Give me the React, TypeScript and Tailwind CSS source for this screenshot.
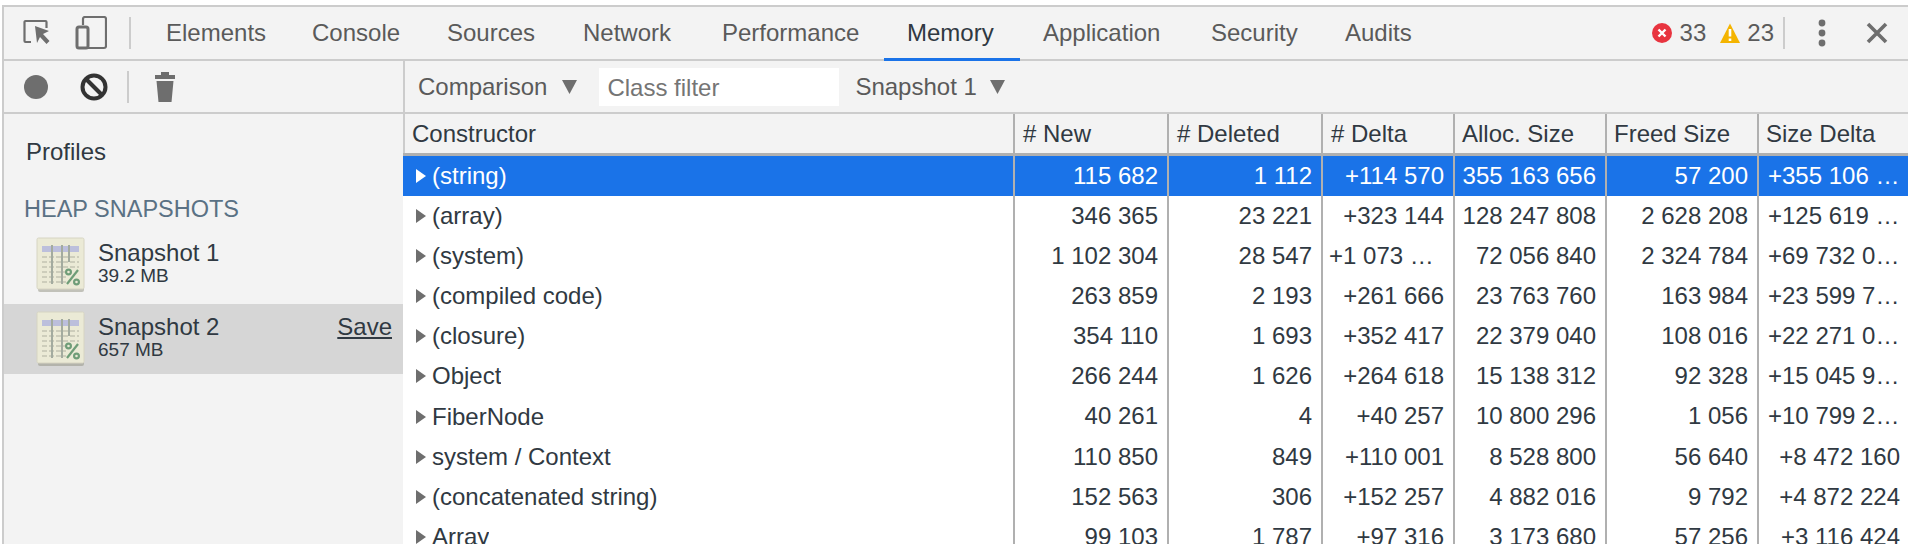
import React from 'react';

const tabs = [
  { name: 'Elements', width: 'w-[146px]' },
  { name: 'Console', width: 'w-[135px]' },
  { name: 'Sources', width: 'w-[136px]' },
  { name: 'Network', width: 'w-[139px]' },
  { name: 'Performance', width: 'w-[185px]' },
  { name: 'Memory', width: 'w-[136px]' },
  { name: 'Application', width: 'w-[168px]' },
  { name: 'Security', width: 'w-[134px]' },
  { name: 'Audits', width: 'w-[110px]' },
];

const columns = ['Constructor', '# New', '# Deleted', '# Delta', 'Alloc. Size', 'Freed Size', 'Size Delta'];

const rows = [
  ['(string)', '115 682', '1 112', '+114 570', '355 163 656', '57 200', '+355 106 456'],
  ['(array)', '346 365', '23 221', '+323 144', '128 247 808', '2 628 208', '+125 619 600'],
  ['(system)', '1 102 304', '28 547', '+1 073 757', '72 056 840', '2 324 784', '+69 732 056'],
  ['(compiled code)', '263 859', '2 193', '+261 666', '23 763 760', '163 984', '+23 599 776'],
  ['(closure)', '354 110', '1 693', '+352 417', '22 379 040', '108 016', '+22 271 024'],
  ['Object', '266 244', '1 626', '+264 618', '15 138 312', '92 328', '+15 045 984'],
  ['FiberNode', '40 261', '4', '+40 257', '10 800 296', '1 056', '+10 799 240'],
  ['system / Context', '110 850', '849', '+110 001', '8 528 800', '56 640', '+8 472 160'],
  ['(concatenated string)', '152 563', '306', '+152 257', '4 882 016', '9 792', '+4 872 224'],
  ['Array', '99 103', '1 787', '+97 316', '3 173 680', '57 256', '+3 116 424'],
];

const gridCols = 'grid grid-cols-[610px_154px_154px_132px_152px_152px_151px]';

const SnapshotIcon = () => (
  <svg width="50" height="56" viewBox="0 0 50 56" className="shrink-0 blur-[0.6px]">
    <rect x="2" y="3" width="46" height="52" rx="2" fill="#8f8f80" opacity="0.5" />
    <rect x="1" y="1" width="47" height="51" rx="1.5" fill="#ebead6" stroke="#d6d4c2" />
    <rect x="6" y="9" width="37" height="6" fill="#bcbfdc" />
    <g stroke="#c4c4b2" strokeWidth="1.5" strokeDasharray="5 2">
      <path d="M6 20h37M6 25h37M6 30h37M6 35h24M6 40h24M6 45h24" />
    </g>
    <g stroke="#a3ab9f" strokeWidth="2">
      <path d="M16 8v39M26 8v39M33 8v17" />
    </g>
    <g stroke="#6f9d78" strokeWidth="2.2" fill="none">
      <path d="M42 33 31 47" />
      <circle cx="32.5" cy="35" r="2.4" />
      <circle cx="40.5" cy="45" r="2.4" />
    </g>
  </svg>
);

const Arrow = ({ white }: { white: boolean }) => (
  <svg width="12" height="16" viewBox="0 0 12 16" className="mr-[5px] shrink-0">
    <path d="M1 1 11 8 1 15z" fill={white ? '#ffffff' : '#6e6e6e'} />
  </svg>
);

const Caret = () => (
  <svg width="15" height="14" viewBox="0 0 15 14">
    <path d="M0 0h15L7.5 14z" fill="#6e6e6e" />
  </svg>
);

const Divider = () => <div className="w-[2px] h-[32px] bg-[#cccccc]" />;

const App: React.FC = () => {
  return (
    <div
      className="w-[1908px] h-[544px] overflow-hidden bg-white pt-[5px] pl-[2px] text-[24px] text-[#303942]"
      style={{ fontFamily: '"Liberation Sans", Arial, sans-serif' }}
    >
      <div className="h-[539px] flex flex-col border-t-2 border-l-2 border-[#cccccc] bg-[#f3f3f3]">
        {/* Top tab bar */}
        <div className="h-[54px] shrink-0 flex items-stretch border-b-2 border-[#cccccc]">
          <div className="w-[125px] flex items-center shrink-0">
            <svg width="30" height="30" viewBox="0 0 30 30" className="ml-[19px]">
              <path d="M8 24H2.5a1 1 0 0 1-1-1V4a1 1 0 0 1 1-1h20a1 1 0 0 1 1 1v6" fill="none" stroke="#6e6e6e" strokeWidth="2.2" />
              <path d="M12 8 26 13l-6 3 6.5 7-3 3-6.5-7-3 6z" fill="#6e6e6e" />
            </svg>
            <svg width="32" height="34" viewBox="0 0 32 34" className="ml-[22px]">
              <path d="M8 9V3a2 2 0 0 1 2-2h19a2 2 0 0 1 2 2v27a2 2 0 0 1-2 2H13" fill="none" stroke="#6e6e6e" strokeWidth="2.2" />
              <rect x="2" y="11" width="11" height="21" rx="2" fill="none" stroke="#6e6e6e" strokeWidth="3" />
            </svg>
          </div>
          <div className="flex items-center">
            <Divider />
          </div>
          <div className="flex ml-[12px]">
            {tabs.map((tab) => (
              <div
                key={tab.name}
                className={
                  tab.name === 'Memory'
                    ? `${tab.width} pl-[23px] flex items-center border-b-[3px] -mb-[2px] border-[#1a73e8] text-[#303942]`
                    : `${tab.width} pl-[23px] flex items-center text-[#5a5a5a]`
                }
              >
                {tab.name}
              </div>
            ))}
          </div>
          <div className="ml-auto flex items-center text-[#5a5a5a]">
            <svg width="20" height="20" viewBox="0 0 20 20" className="mr-[8px]">
              <circle cx="10" cy="10" r="10" fill="#e8343f" />
              <path d="M6.5 6.5l7 7M13.5 6.5l-7 7" stroke="#ffffff" strokeWidth="2.4" />
            </svg>
            <span>33</span>
            <svg width="20" height="20" viewBox="0 0 20 20" className="ml-[14px] mr-[7px]">
              <path d="M10 0.5 20 20H0z" fill="#f4b400" />
              <path d="M10 6v7.5M10 15.5v2.5" stroke="#ffffff" strokeWidth="2.6" />
            </svg>
            <span>23</span>
            <div className="ml-[9px]">
              <Divider />
            </div>
            <svg width="8" height="28" viewBox="0 0 8 28" className="ml-[33px]">
              <circle cx="4" cy="4" r="3.4" fill="#6e6e6e" />
              <circle cx="4" cy="14" r="3.4" fill="#6e6e6e" />
              <circle cx="4" cy="24" r="3.4" fill="#6e6e6e" />
            </svg>
            <svg width="22" height="22" viewBox="0 0 22 22" className="ml-[40px] mr-[20px]">
              <path d="M2 2l18 18M20 2 2 20" stroke="#6e6e6e" strokeWidth="3.6" />
            </svg>
          </div>
        </div>

        <div className="flex flex-1 min-h-0">
          {/* Left sidebar */}
          <div className="w-[399px] shrink-0 flex flex-col">
            <div className="h-[53px] shrink-0 flex items-center border-b-2 border-[#cccccc]">
              <svg width="24" height="24" viewBox="0 0 24 24" className="ml-[20px]">
                <circle cx="12" cy="12" r="12" fill="#6e6e6e" />
              </svg>
              <svg width="28" height="28" viewBox="0 0 28 28" className="ml-[32px]">
                <circle cx="14" cy="14" r="11.5" fill="none" stroke="#333333" strokeWidth="4" />
                <path d="M6 6l16 16" stroke="#333333" strokeWidth="4" />
              </svg>
              <div className="ml-[19px]">
                <Divider />
              </div>
              <svg width="20" height="30" viewBox="0 0 20 30" className="ml-[26px]">
                <path d="M6 0h8v3h6v4H0V3h6z" fill="#6e6e6e" />
                <path d="M1.5 9h17l-2 21h-13z" fill="#6e6e6e" />
              </svg>
            </div>
            <div className="pl-[22px] mt-[24px] leading-[28px]">Profiles</div>
            <div className="pl-[20px] mt-[29px] leading-[28px] text-[#5a7184] text-[23.5px]">HEAP SNAPSHOTS</div>
            <div className="h-[70px] mt-[7px] mb-[4px] flex items-center pl-[32px]">
              <SnapshotIcon />
              <div className="ml-[12px] mb-[6px]">
                <div className="leading-[27px]">Snapshot 1</div>
                <div className="leading-[20px] text-[19px]">39.2 MB</div>
              </div>
            </div>
            <div className="h-[70px] flex items-center pl-[32px] pr-[11px] bg-[#d6d6d6]">
              <SnapshotIcon />
              <div className="ml-[12px] mb-[6px]">
                <div className="leading-[27px]">Snapshot 2</div>
                <div className="leading-[20px] text-[19px]">657 MB</div>
              </div>
              <div className="ml-auto mb-[24px] underline">Save</div>
            </div>
          </div>

          {/* Right panel */}
          <div className="flex-1 min-w-0 flex flex-col border-l-2 border-[#cccccc]">
            <div className="h-[53px] shrink-0 flex items-center border-b-2 border-[#cccccc] text-[#5a5a5a]">
              <span className="ml-[13px]">Comparison</span>
              <div className="ml-[15px]">
                <Caret />
              </div>
              <div className="ml-[22px] w-[240px] h-[38px] bg-white flex items-center pl-[8px] pt-[2px] text-[#757575]">
                Class filter
              </div>
              <span className="ml-[16px]">Snapshot 1</span>
              <div className="ml-[13px]">
                <Caret />
              </div>
            </div>

            <div className={`${gridCols} -ml-[2px] h-[42px] shrink-0 border-b-[3px] border-[#b0b0b0]`}>
              {columns.map((col, i) => (
                <div
                  key={col}
                  className={
                    i === 0
                      ? 'pl-[9px] flex items-center'
                      : i < 4
                        ? 'pl-[8px] flex items-center border-l-2 border-[#b0b0b0]'
                        : 'pl-[7px] flex items-center border-l-2 border-[#b0b0b0]'
                  }
                >
                  {col}
                </div>
              ))}
            </div>

            <div className="-ml-[2px] bg-white flex-1 min-h-0">
              {rows.map((row, r) => (
                <div
                  key={row[0]}
                  className={
                    r === 0
                      ? `${gridCols} h-[40px] bg-[#1a73e8] text-white`
                      : `${gridCols} h-[40.1px] text-[#303942]`
                  }
                >
                  {row.map((cell, i) =>
                    i === 0 ? (
                      <div key={i} className="flex items-center pl-[12px]">
                        <Arrow white={r === 0} />
                        <span className="truncate">{cell}</span>
                      </div>
                    ) : (
                      <div
                        key={i}
                        className={
                          i === 6
                            ? 'min-w-0 pl-[9px] pr-[8px] leading-[40px] text-right truncate border-l-2 border-[#b0b0b0]'
                            : 'min-w-0 pl-[6px] pr-[9px] leading-[40px] text-right truncate border-l-2 border-[#b0b0b0]'
                        }
                      >
                        {cell}
                      </div>
                    )
                  )}
                </div>
              ))}
            </div>
          </div>
        </div>
      </div>
    </div>
  );
};

export default App;
